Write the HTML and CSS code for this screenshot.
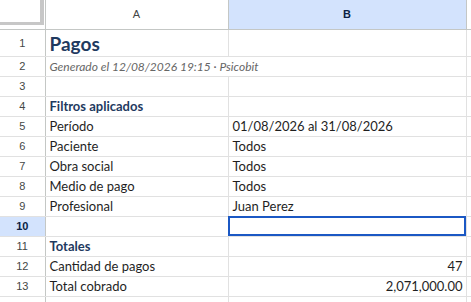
FILE: index.html
```html
<!DOCTYPE html>
<html lang="es">
<head>
  <meta charset="UTF-8">
  <title>Pagos</title>
  <link rel="stylesheet" href="styles.css">
</head>
<body>

<table class="sheet">
  <colgroup>
    <col class="c-head">
    <col class="c-a">
    <col class="c-b">
    <col class="c-rest">
  </colgroup>
  <thead>
    <tr>
      <th class="corner"><div class="corner-box"></div></th>
      <th class="col-head">A</th>
      <th class="col-head active">B</th>
      <th class="col-head"></th>
    </tr>
  </thead>
  <tbody>
    <tr class="r-title">
      <th class="row-head">1</th>
      <td class="title">Pagos</td>
      <td></td><td></td>
    </tr>
    <tr>
      <th class="row-head">2</th>
      <td class="sub" colspan="2">Generado el 12/08/2026 19:15 · Psicobit</td>
      <td></td>
    </tr>
    <tr>
      <th class="row-head">3</th>
      <td></td><td></td><td></td>
    </tr>
    <tr>
      <th class="row-head">4</th>
      <td class="section">Filtros aplicados</td>
      <td></td><td></td>
    </tr>
    <tr>
      <th class="row-head">5</th>
      <td>Período</td>
      <td>01/08/2026 al 31/08/2026</td><td></td>
    </tr>
    <tr>
      <th class="row-head">6</th>
      <td>Paciente</td>
      <td>Todos</td><td></td>
    </tr>
    <tr>
      <th class="row-head">7</th>
      <td>Obra social</td>
      <td>Todos</td><td></td>
    </tr>
    <tr>
      <th class="row-head">8</th>
      <td>Medio de pago</td>
      <td>Todos</td><td></td>
    </tr>
    <tr>
      <th class="row-head">9</th>
      <td>Profesional</td>
      <td>Juan Perez</td><td></td>
    </tr>
    <tr>
      <th class="row-head active">10</th>
      <td></td>
      <td class="selected"></td><td></td>
    </tr>
    <tr>
      <th class="row-head">11</th>
      <td class="section">Totales</td>
      <td></td><td></td>
    </tr>
    <tr>
      <th class="row-head">12</th>
      <td>Cantidad de pagos</td>
      <td class="num">47</td><td></td>
    </tr>
    <tr>
      <th class="row-head">13</th>
      <td>Total cobrado</td>
      <td class="num">2,071,000.00</td><td></td>
    </tr>
    <tr>
      <th class="row-head">14</th>
      <td></td><td></td><td></td>
    </tr>
  </tbody>
</table>

</body>
</html>
```

FILE: styles.css
```css
* {
  box-sizing: border-box;
}

body {
  margin: 0;
  background: #fff;
  overflow: hidden;
}

.sheet {
  border-collapse: collapse;
  table-layout: fixed;
  width: 480px;
  font-family: Lato, "Liberation Sans", sans-serif;
  font-size: 13px;
  color: #1f1f1f;
}

.c-head { width: 45px; }
.c-a { width: 183px; }
.c-b { width: 238px; }
.c-rest { width: 14px; }

th, td {
  padding: 0 3px 2px 4px;
  height: 20px;
  border-right: 1px solid #e1e1e1;
  border-bottom: 1px solid #e1e1e1;
  white-space: nowrap;
  overflow: hidden;
  vertical-align: bottom;
  text-align: left;
  font-weight: normal;
}

/* headers */
thead th {
  height: 29px;
  border-bottom: 1px solid #c4c7c5;
  border-right: 1px solid #c4c7c5;
  font-family: "Liberation Sans", Arial, sans-serif;
  font-size: 11px;
  color: #444746;
  text-align: center;
  vertical-align: middle;
  padding: 0;
}

.col-head.active {
  background: #d3e3fd;
  color: #0b1f44;
  font-weight: bold;
}

.corner {
  vertical-align: top;
}

.corner-box {
  width: 44px;
  height: 25px;
  border-right: 4px solid #c7c7c7;
  border-bottom: 3px solid #c7c7c7;
}

.row-head {
  border-right: 1px solid #c4c7c5;
  font-family: "Liberation Sans", Arial, sans-serif;
  font-size: 11px;
  color: #444746;
  text-align: center;
  vertical-align: middle;
  padding: 0;
}

.row-head.active {
  background: #d3e3fd;
  color: #0b1f44;
  font-weight: bold;
}

/* cells */
.r-title td, .r-title th {
  height: 27px;
}

.title {
  font-size: 19px;
  font-weight: bold;
  color: #1f3a5f;
  padding-bottom: 1px;
}

.sub {
  font-style: italic;
  font-size: 12px;
  color: #666;
  padding-bottom: 2px;
}

.section {
  font-weight: bold;
  color: #1f3a5f;
}

.num {
  text-align: right;
}

.selected {
  outline: 2px solid #1b58c4;
  outline-offset: -2px;
  box-shadow: 0 0 0 1px #a8c7fa;
}
```
